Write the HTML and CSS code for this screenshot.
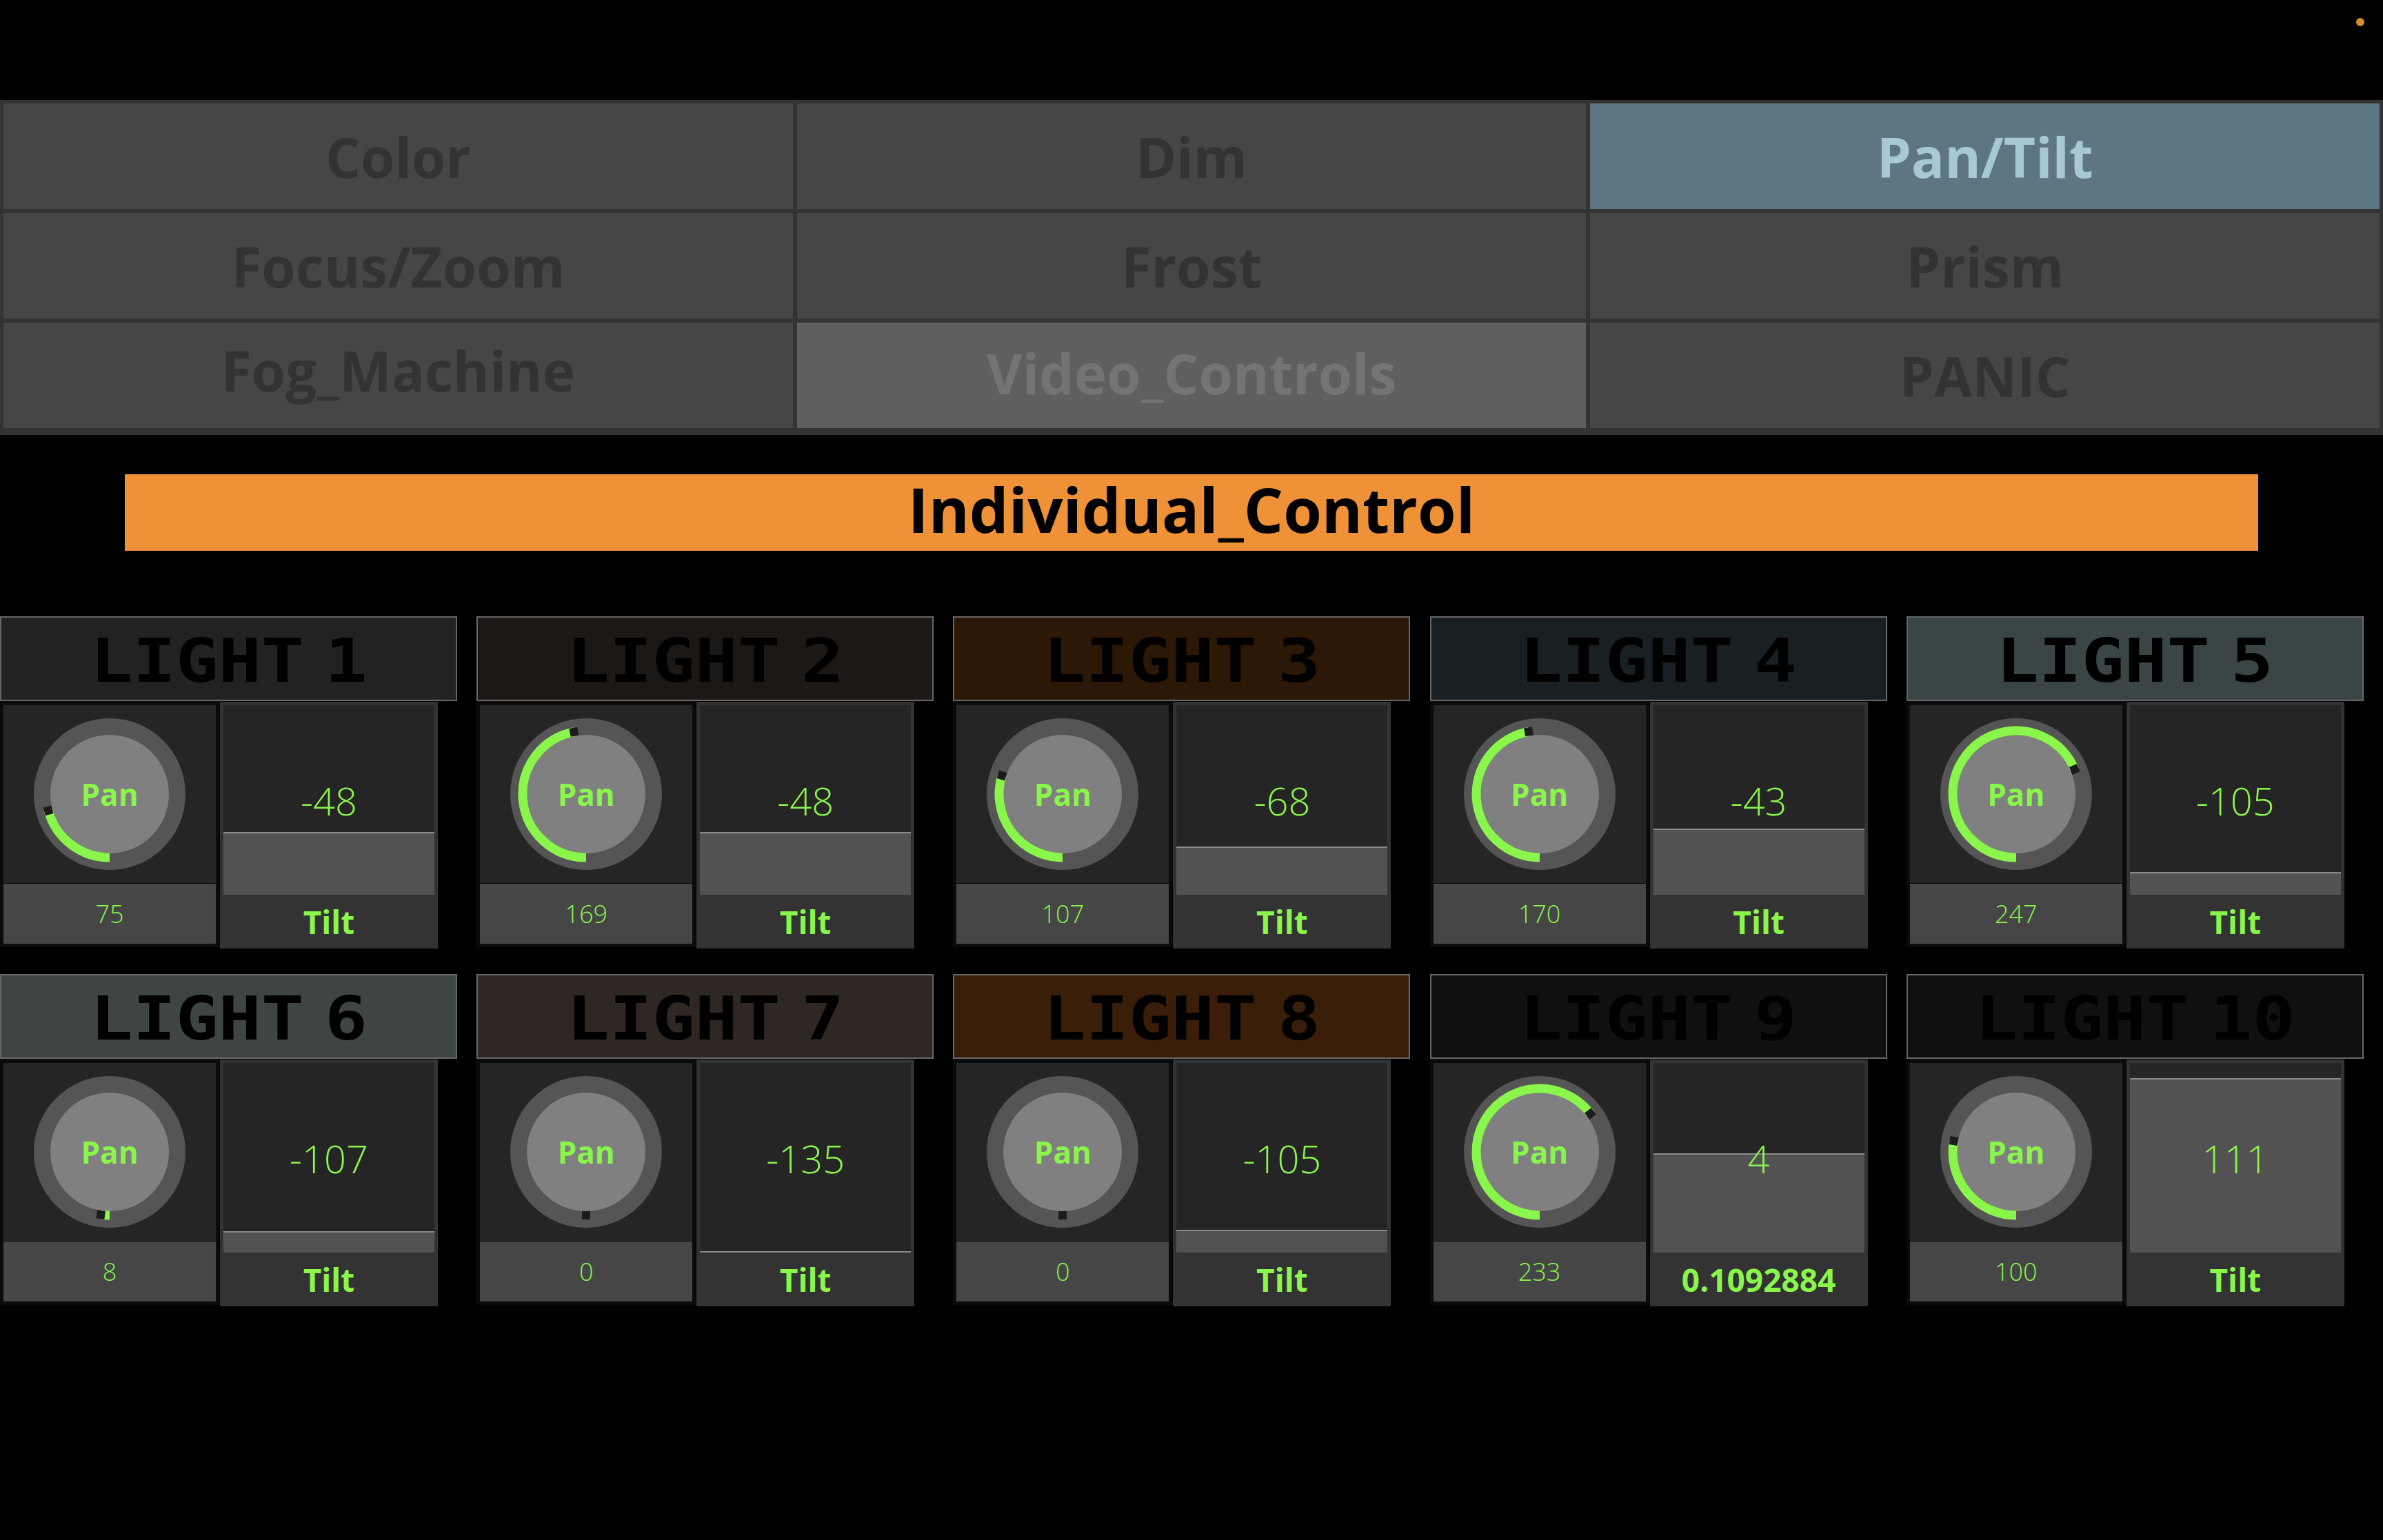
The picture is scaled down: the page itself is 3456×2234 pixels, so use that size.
FILE: index.html
```html
<!DOCTYPE html>
<html lang="en">
<head>
<meta charset="utf-8">
<title>Pan/Tilt – Individual Control</title>
<link rel="stylesheet" href="styles.css">
</head>
<body>
<div class="page">
  <span class="status-dot"></span>

  <nav class="tabs">
    <div class="tab">Color</div>
    <div class="tab">Dim</div>
    <div class="tab active">Pan/Tilt</div>
    <div class="tab">Focus/Zoom</div>
    <div class="tab">Frost</div>
    <div class="tab">Prism</div>
    <div class="tab lift-lg">Fog_Machine</div>
    <div class="tab pressed lift-sm">Video_Controls</div>
    <div class="tab">PANIC</div>
  </nav>

  <div class="banner"><span>Individual_Control</span></div>

  <section class="lights">

    <div class="light">
      <div class="light-head c1"><span class="head-text">LIGHT 1</span></div>
      <div class="controls">
        <div class="pan-col">
          <div class="knob-panel">
            <svg class="knob" viewBox="0 0 220 220" width="220" height="220">
              <circle cx="110" cy="110" r="110" class="k-outer"/>
              <circle cx="110" cy="110" r="86" class="k-inner"/>
              <path d="M110 202 A92 92 0 0 1 21.13 133.81" class="k-arc"/>
              <rect x="15.13" y="127.81" width="12" height="12" transform="rotate(75 21.13 133.81)" class="k-mark"/>
            </svg>
            <span class="knob-label">Pan</span>
          </div>
          <div class="pan-value">75</div>
        </div>
        <div class="tilt-col">
          <div class="fader"><div class="fill" style="height:89px"></div><span class="fader-value">-48</span></div>
          <div class="tilt-label">Tilt</div>
        </div>
      </div>
    </div>

    <div class="light">
      <div class="light-head c2"><span class="head-text">LIGHT 2</span></div>
      <div class="controls">
        <div class="pan-col">
          <div class="knob-panel">
            <svg class="knob" viewBox="0 0 220 220" width="220" height="220">
              <circle cx="110" cy="110" r="110" class="k-outer"/>
              <circle cx="110" cy="110" r="86" class="k-inner"/>
              <path d="M110 202 A92 92 0 0 1 92.45 19.69" class="k-arc"/>
              <rect x="86.45" y="13.69" width="12" height="12" transform="rotate(169 92.45 19.69)" class="k-mark"/>
            </svg>
            <span class="knob-label">Pan</span>
          </div>
          <div class="pan-value">169</div>
        </div>
        <div class="tilt-col">
          <div class="fader"><div class="fill" style="height:89px"></div><span class="fader-value">-48</span></div>
          <div class="tilt-label">Tilt</div>
        </div>
      </div>
    </div>

    <div class="light">
      <div class="light-head c3"><span class="head-text">LIGHT 3</span></div>
      <div class="controls">
        <div class="pan-col">
          <div class="knob-panel">
            <svg class="knob" viewBox="0 0 220 220" width="220" height="220">
              <circle cx="110" cy="110" r="110" class="k-outer"/>
              <circle cx="110" cy="110" r="86" class="k-inner"/>
              <path d="M110 202 A92 92 0 0 1 22.02 83.10" class="k-arc"/>
              <rect x="16.02" y="77.10" width="12" height="12" transform="rotate(107 22.02 83.10)" class="k-mark"/>
            </svg>
            <span class="knob-label">Pan</span>
          </div>
          <div class="pan-value">107</div>
        </div>
        <div class="tilt-col">
          <div class="fader"><div class="fill" style="height:68px"></div><span class="fader-value">-68</span></div>
          <div class="tilt-label">Tilt</div>
        </div>
      </div>
    </div>

    <div class="light">
      <div class="light-head c4"><span class="head-text">LIGHT 4</span></div>
      <div class="controls">
        <div class="pan-col">
          <div class="knob-panel">
            <svg class="knob" viewBox="0 0 220 220" width="220" height="220">
              <circle cx="110" cy="110" r="110" class="k-outer"/>
              <circle cx="110" cy="110" r="86" class="k-inner"/>
              <path d="M110 202 A92 92 0 0 1 94.02 19.40" class="k-arc"/>
              <rect x="88.02" y="13.40" width="12" height="12" transform="rotate(170 94.02 19.40)" class="k-mark"/>
            </svg>
            <span class="knob-label">Pan</span>
          </div>
          <div class="pan-value">170</div>
        </div>
        <div class="tilt-col">
          <div class="fader"><div class="fill" style="height:94px"></div><span class="fader-value">-43</span></div>
          <div class="tilt-label">Tilt</div>
        </div>
      </div>
    </div>

    <div class="light">
      <div class="light-head c5"><span class="head-text">LIGHT 5</span></div>
      <div class="controls">
        <div class="pan-col">
          <div class="knob-panel">
            <svg class="knob" viewBox="0 0 220 220" width="220" height="220">
              <circle cx="110" cy="110" r="110" class="k-outer"/>
              <circle cx="110" cy="110" r="86" class="k-inner"/>
              <path d="M110 202 A92 92 0 1 1 194.69 74.05" class="k-arc"/>
              <rect x="188.69" y="68.05" width="12" height="12" transform="rotate(247 194.69 74.05)" class="k-mark"/>
            </svg>
            <span class="knob-label">Pan</span>
          </div>
          <div class="pan-value">247</div>
        </div>
        <div class="tilt-col">
          <div class="fader"><div class="fill" style="height:31px"></div><span class="fader-value">-105</span></div>
          <div class="tilt-label">Tilt</div>
        </div>
      </div>
    </div>

    <div class="light">
      <div class="light-head c6"><span class="head-text">LIGHT 6</span></div>
      <div class="controls">
        <div class="pan-col">
          <div class="knob-panel">
            <svg class="knob" viewBox="0 0 220 220" width="220" height="220">
              <circle cx="110" cy="110" r="110" class="k-outer"/>
              <circle cx="110" cy="110" r="86" class="k-inner"/>
              <path d="M110 202 A92 92 0 0 1 97.20 201.11" class="k-arc"/>
              <rect x="91.20" y="195.11" width="12" height="12" transform="rotate(8 97.20 201.11)" class="k-mark"/>
            </svg>
            <span class="knob-label">Pan</span>
          </div>
          <div class="pan-value">8</div>
        </div>
        <div class="tilt-col">
          <div class="fader"><div class="fill" style="height:29px"></div><span class="fader-value">-107</span></div>
          <div class="tilt-label">Tilt</div>
        </div>
      </div>
    </div>

    <div class="light">
      <div class="light-head c7"><span class="head-text">LIGHT 7</span></div>
      <div class="controls">
        <div class="pan-col">
          <div class="knob-panel">
            <svg class="knob" viewBox="0 0 220 220" width="220" height="220">
              <circle cx="110" cy="110" r="110" class="k-outer"/>
              <circle cx="110" cy="110" r="86" class="k-inner"/>
              <rect x="104" y="196" width="12" height="12" class="k-mark"/>
            </svg>
            <span class="knob-label">Pan</span>
          </div>
          <div class="pan-value">0</div>
        </div>
        <div class="tilt-col">
          <div class="fader"><div class="fill" style="height:0px"></div><span class="fader-value">-135</span></div>
          <div class="tilt-label">Tilt</div>
        </div>
      </div>
    </div>

    <div class="light">
      <div class="light-head c8"><span class="head-text">LIGHT 8</span></div>
      <div class="controls">
        <div class="pan-col">
          <div class="knob-panel">
            <svg class="knob" viewBox="0 0 220 220" width="220" height="220">
              <circle cx="110" cy="110" r="110" class="k-outer"/>
              <circle cx="110" cy="110" r="86" class="k-inner"/>
              <rect x="104" y="196" width="12" height="12" class="k-mark"/>
            </svg>
            <span class="knob-label">Pan</span>
          </div>
          <div class="pan-value">0</div>
        </div>
        <div class="tilt-col">
          <div class="fader"><div class="fill" style="height:31px"></div><span class="fader-value">-105</span></div>
          <div class="tilt-label">Tilt</div>
        </div>
      </div>
    </div>

    <div class="light">
      <div class="light-head c9"><span class="head-text">LIGHT 9</span></div>
      <div class="controls">
        <div class="pan-col">
          <div class="knob-panel">
            <svg class="knob" viewBox="0 0 220 220" width="220" height="220">
              <circle cx="110" cy="110" r="110" class="k-outer"/>
              <circle cx="110" cy="110" r="86" class="k-inner"/>
              <path d="M110 202 A92 92 0 1 1 183.47 54.63" class="k-arc"/>
              <rect x="177.47" y="48.63" width="12" height="12" transform="rotate(233 183.47 54.63)" class="k-mark"/>
            </svg>
            <span class="knob-label">Pan</span>
          </div>
          <div class="pan-value">233</div>
        </div>
        <div class="tilt-col">
          <div class="fader"><div class="fill" style="height:142px"></div><span class="fader-value">4</span></div>
          <div class="tilt-label">0.1092884</div>
        </div>
      </div>
    </div>

    <div class="light">
      <div class="light-head c10"><span class="head-text">LIGHT 10</span></div>
      <div class="controls">
        <div class="pan-col">
          <div class="knob-panel">
            <svg class="knob" viewBox="0 0 220 220" width="220" height="220">
              <circle cx="110" cy="110" r="110" class="k-outer"/>
              <circle cx="110" cy="110" r="86" class="k-inner"/>
              <path d="M110 202 A92 92 0 0 1 19.40 94.02" class="k-arc"/>
              <rect x="13.40" y="88.02" width="12" height="12" transform="rotate(100 19.40 94.02)" class="k-mark"/>
            </svg>
            <span class="knob-label">Pan</span>
          </div>
          <div class="pan-value">100</div>
        </div>
        <div class="tilt-col">
          <div class="fader"><div class="fill" style="height:251px"></div><span class="fader-value">111</span></div>
          <div class="tilt-label">Tilt</div>
        </div>
      </div>
    </div>

  </section>
</div>
</body>
</html>
```

FILE: styles.css
```css
html, body {
  margin: 0;
  padding: 0;
  background: #000;
}

body {
  font-family: "Open Sans", "DejaVu Sans", sans-serif;
  width: 3456px;
  height: 2234px;
  overflow: hidden;
}

.page {
  position: relative;
  padding-top: 145px;
}

.status-dot {
  position: absolute;
  top: 26px;
  right: 27px;
  width: 12px;
  height: 12px;
  border-radius: 50%;
  background: #d28a33;
}

/* ---------- tab grid ---------- */
.tabs {
  display: grid;
  grid-template-columns: repeat(3, 1fr);
  grid-template-rows: repeat(3, 153px);
  gap: 6px;
  padding: 5px 5px 10px;
  background: #333333;
}

.tab {
  background: #464646;
  color: #333333;
  font-weight: 700;
  font-size: 80px;
  line-height: 1;
  display: flex;
  align-items: center;
  justify-content: center;
}

.tab.lift-lg { padding-bottom: 16px; }
.tab.lift-sm { padding-bottom: 8px; }

.tab.active {
  background: #5e7582;
  color: #a9c8d5;
}

.tab.pressed {
  background: #5f5f5f;
  color: #747474;
}

/* ---------- banner ---------- */
.banner {
  width: 3094px;
  height: 111px;
  box-sizing: border-box;
  margin: 57px auto 0;
  padding-bottom: 12px;
  background: #ef9137;
  color: #000;
  font-weight: 700;
  font-size: 90px;
  line-height: 1;
  display: flex;
  align-items: center;
  justify-content: center;
}

/* ---------- lights ---------- */
.lights {
  display: grid;
  grid-template-columns: repeat(5, 1fr);
  row-gap: 37px;
  margin-top: 95px;
}

.light {
  width: 663px;
}

.light-head {
  box-sizing: border-box;
  height: 123px;
  border: 2px solid #666666;
  display: flex;
  align-items: center;
  justify-content: center;
  padding-top: 6px;
}

.head-text {
  display: inline-block;
  font-family: "DejaVu Sans Mono", "Liberation Mono", monospace;
  font-weight: 700;
  font-size: 88px;
  line-height: 1;
  color: #000;
  word-spacing: -27px;
  transform: scaleX(1.17);
  white-space: nowrap;
}

.c1  { background: #222222; }
.c2  { background: #1c1815; }
.c3  { background: #2b1807; }
.c4  { background: #192023; }
.c5  { background: #3a4646; }
.c6  { background: #3f4545; }
.c7  { background: #2f2724; }
.c8  { background: #3b1e0a; }
.c9  { background: #0e1011; }
.c10 { background: #0e1011; }

.controls {
  display: flex;
  width: 635px;
  gap: 1px;
  align-items: flex-start;
}

.pan-col {
  width: 318px;
  box-sizing: border-box;
  padding: 6px 5px 5px;
  background: #0b0b0b;
  display: flex;
  flex-direction: column;
  gap: 1px;
}

.knob-panel {
  height: 258px;
  background: #252525;
  display: grid;
  place-items: center;
}

.knob-panel > * {
  grid-area: 1 / 1;
}

.knob {
  display: block;
}

.k-outer { fill: #555555; }
.k-inner { fill: #808080; }
.k-arc   { fill: none; stroke: #8af54b; stroke-width: 13; }
.k-mark  { fill: #1c1c1c; }

.knob-label {
  color: #8af54b;
  font-weight: 700;
  font-size: 44px;
  line-height: 1;
}

.pan-value {
  height: 87px;
  background: #464646;
  color: #8af54b;
  font-weight: 300;
  font-size: 36px;
  line-height: 1;
  display: flex;
  align-items: center;
  justify-content: center;
}

.tilt-col {
  width: 316px;
  box-sizing: border-box;
  margin-top: 1px;
  padding: 5px 5px 0;
  background: #333333;
}

.fader {
  height: 275px;
  background: #252525;
  display: grid;
}

.fader > * {
  grid-area: 1 / 1;
}

.fill {
  align-self: end;
  background: #525252;
  border-top: 2px solid #8a8a8a;
}

.fader-value {
  align-self: center;
  justify-self: center;
  color: #8af54b;
  font-weight: 300;
  font-size: 56px;
  line-height: 1;
}

.tilt-label {
  height: 78px;
  color: #8af54b;
  font-weight: 700;
  font-size: 46px;
  line-height: 1;
  display: flex;
  align-items: center;
  justify-content: center;
}
```
